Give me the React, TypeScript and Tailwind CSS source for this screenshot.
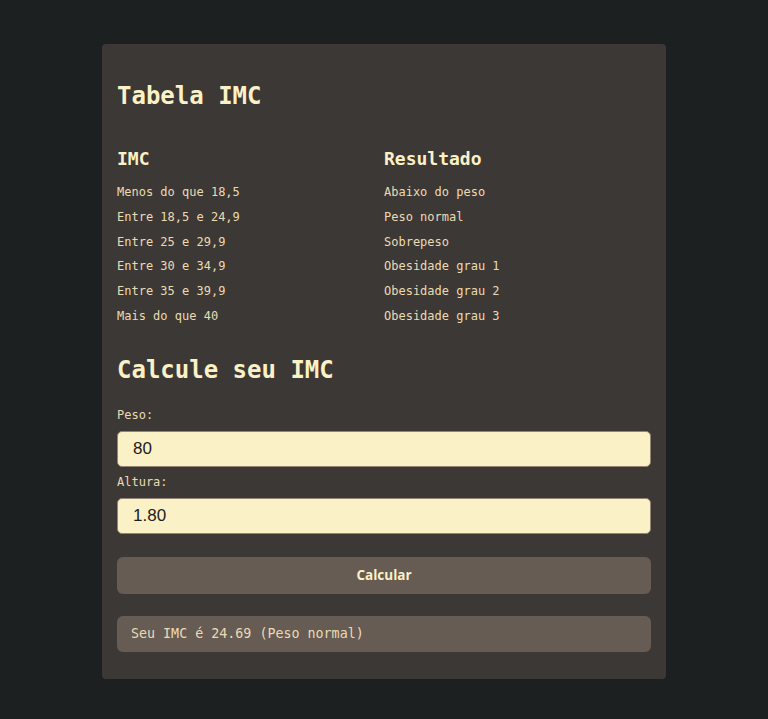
import React from "react";

const rows: [string, string][] = [
  ["Menos do que 18,5", "Abaixo do peso"],
  ["Entre 18,5 e 24,9", "Peso normal"],
  ["Entre 25 e 29,9", "Sobrepeso"],
  ["Entre 30 e 34,9", "Obesidade grau 1"],
  ["Entre 35 e 39,9", "Obesidade grau 2"],
  ["Mais do que 40", "Obesidade grau 3"],
];

const mono = "font-['DejaVu_Sans_Mono','Liberation_Mono',monospace]";

export default function App() {
  return (
    <div className={`min-h-[719px] w-full bg-[#1d2021] pt-[44px] pb-[40px] ${mono}`}>
      <div className="mx-auto w-[564px] rounded-[4px] bg-[#3c3836] px-[15px] pt-[34px] pb-[27px]">
        <h2 className="h-[36px] text-[24px] font-bold leading-[36px] text-[#fbf1c7]">Tabela IMC</h2>

        <div className="mt-[32px]">
          <div className="grid h-[26px] grid-cols-2 items-center text-[18px] font-bold leading-[26px] text-[#fbf1c7]">
            <div>IMC</div>
            <div>Resultado</div>
          </div>
          <div className="mt-[8px]">
            {rows.map(([a, b]) => (
              <div key={a} className="grid h-[24.8px] grid-cols-2 items-center text-[12px] leading-[24.8px] text-[#ebdbb2]">
                <div>{a}</div>
                <div>{b}</div>
              </div>
            ))}
          </div>
        </div>

        <h2 className="mt-[23px] h-[36px] text-[24px] font-bold leading-[36px] text-[#fbf1c7]">Calcule seu IMC</h2>

        <div className="mt-[18px] h-[18px] text-[12px] leading-[18px] text-[#ebdbb2]">Peso:</div>
        <div className="mt-[7px] flex h-[36px] items-center rounded-[5px] border border-[#928374] bg-[#fbf1c7] pl-[15px] font-['Liberation_Sans',Arial,sans-serif] text-[17px] text-[#1d2021]">
          80
        </div>

        <div className="mt-[6px] h-[18px] text-[12px] leading-[18px] text-[#ebdbb2]">Altura:</div>
        <div className="mt-[7px] flex h-[36px] items-center rounded-[5px] border border-[#928374] bg-[#fbf1c7] pl-[15px] font-['Liberation_Sans',Arial,sans-serif] text-[17px] text-[#1d2021]">
          1.80
        </div>

        <button className="mt-[23px] flex h-[37px] w-full items-center justify-center rounded-[6px] bg-[#665c54] font-['Open_Sans',sans-serif] text-[13.5px] font-bold text-[#fbf1c7]">
          Calcular
        </button>

        <div className="mt-[22px] flex h-[36px] items-center rounded-[6px] bg-[#665c54] pl-[14px] text-[13.33px] text-[#ebdbb2]">
          Seu IMC é 24.69 (Peso normal)
        </div>
      </div>
    </div>
  );
}
